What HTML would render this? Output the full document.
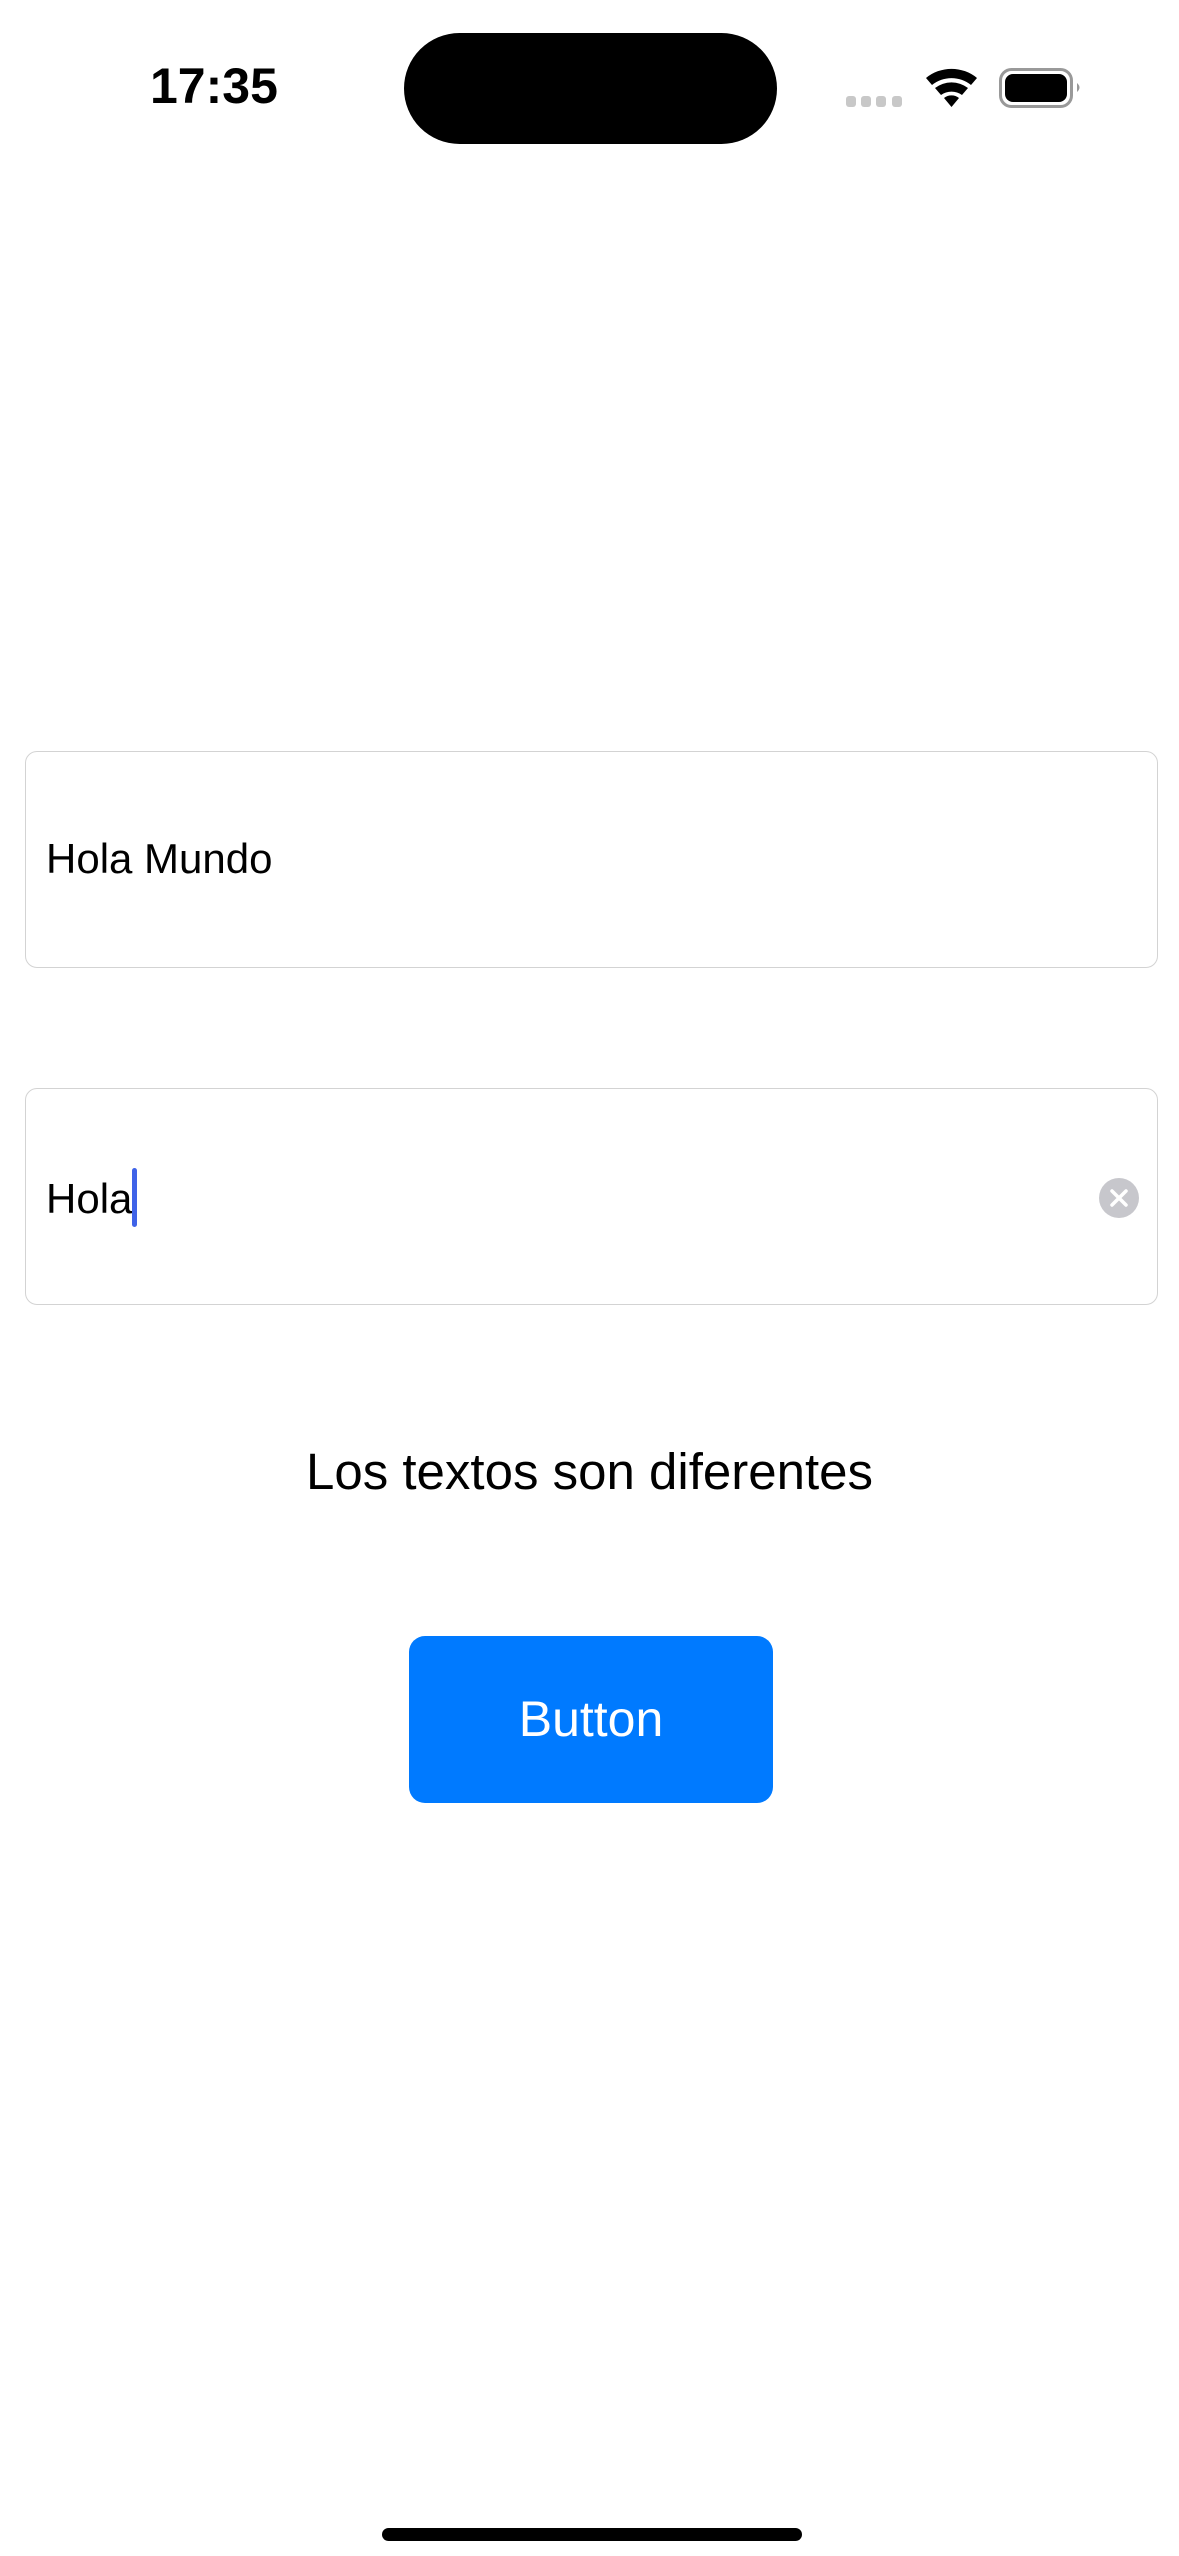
<!DOCTYPE html>
<html><head><meta charset="utf-8"><style>
html,body{margin:0;padding:0;background:#fff;}
body{width:1179px;height:2556px;position:relative;overflow:hidden;font-family:"Liberation Sans",sans-serif;}
.abs{position:absolute;}
.field{position:absolute;left:25px;width:1133px;border:1.5px solid #d3d3d3;border-radius:12px;box-sizing:border-box;}
</style></head><body>
<div class="abs" style="left:150px;top:56px;font-size:50px;font-weight:bold;line-height:60px;color:#000;">17:35</div>
<div class="abs" style="left:404px;top:33px;width:373px;height:111px;background:#000;border-radius:56px;"></div>
<svg class="abs" style="left:840px;top:55px" width="260" height="65" viewBox="840 55 260 65">
 <g fill="#c8c8c8"><rect x="846" y="96" width="10" height="11" rx="3"/><rect x="861" y="96" width="10" height="11" rx="3"/><rect x="876" y="96" width="10" height="11" rx="3"/><rect x="892" y="96" width="10" height="11" rx="3"/></g>
 <g fill="#000">
  <path d="M926 78 A40 40 0 0 1 977 78 L971 85 A31 31 0 0 0 932 85 Z"/>
  <path d="M935 88 A27 27 0 0 1 968 88 L962 95 A18 18 0 0 0 941 95 Z"/>
  <path d="M944 98 A12 12 0 0 1 959 98 L951.5 107 Z"/>
 </g>
 <rect x="1000.5" y="69.5" width="71" height="37" rx="11" fill="none" stroke="#999" stroke-width="3"/>
 <rect x="1005" y="74" width="62" height="28" rx="8" fill="#000"/>
 <path d="M1077 83 Q1082 87.5 1077 92 Z" fill="#999"/>
</svg>
<div class="field" style="top:751px;height:217px;"></div>
<div class="abs" style="left:46px;top:834px;font-size:42px;line-height:50px;color:#000;">Hola Mundo</div>
<div class="field" style="top:1088px;height:217px;"></div>
<div class="abs" style="left:46px;top:1174px;font-size:42px;line-height:50px;color:#000;">Hola</div>
<div class="abs" style="left:132px;top:1168px;width:5px;height:59px;background:#3f63e8;border-radius:3px;"></div>
<svg class="abs" style="left:1099px;top:1178px" width="40" height="40" viewBox="0 0 40 40">
 <circle cx="20" cy="20" r="20" fill="#c7c7cc"/>
 <path d="M13 13 L27 27 M27 13 L13 27" stroke="#fff" stroke-width="3.5" stroke-linecap="round"/>
</svg>
<div class="abs" style="left:0;width:1179px;top:1442px;text-align:center;font-size:51px;line-height:60px;color:#000;">Los textos son diferentes</div>
<div class="abs" style="left:409px;top:1636px;width:364px;height:167px;background:#007aff;border-radius:16px;color:#fff;font-size:50px;line-height:167px;text-align:center;">Button</div>
<div class="abs" style="left:382px;top:2528px;width:420px;height:13px;background:#000;border-radius:7px;"></div>
</body></html>
